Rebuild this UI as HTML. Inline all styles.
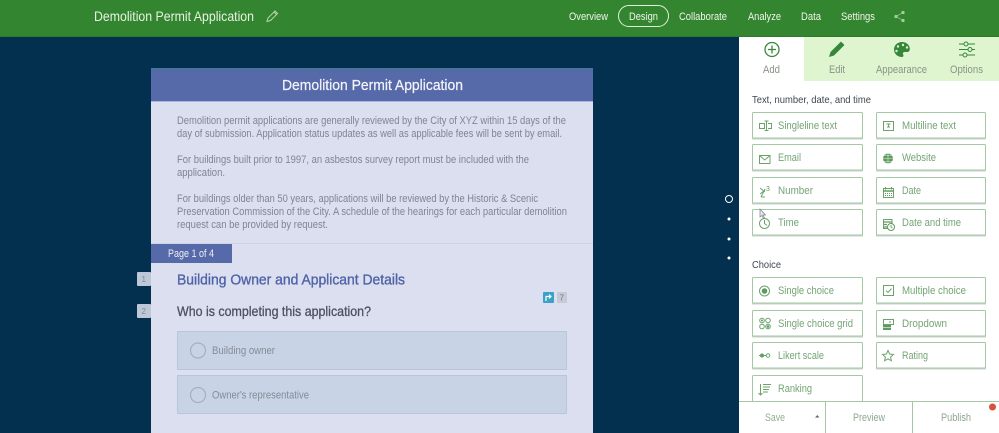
<!DOCTYPE html>
<html><head><meta charset="utf-8"><style>
html,body{margin:0;padding:0;background:#03304f;width:999px;height:433px;overflow:hidden}
svg{display:block;filter:blur(.35px)}
text{font-family:"Liberation Sans",sans-serif}
.b{fill:#fff;stroke:#a3c8a3;stroke-width:1}
.s{fill:#c9d3cc}
.l{fill:#74a474;font-size:11px}
.i{fill:none;stroke:#6ba46b;stroke-width:1}
.f{fill:#5d9c5d}
.p{fill:#7f8493;font-size:11px}
.n{fill:#f1f5ec;font-size:11px}
.t{fill:#869486;font-size:11px}
</style></head><body>
<svg width="999" height="433" viewBox="0 0 999 433" xmlns="http://www.w3.org/2000/svg">
<rect width="999" height="433" fill="#03304f"/>
<rect width="999" height="36" fill="#33862f"/>
<rect y="36" width="999" height="1" fill="#2c7a2e"/>
<text x="94" y="21" font-size="14" fill="#e8f2e4" textLength="160" lengthAdjust="spacingAndGlyphs">Demolition Permit Application</text>
<path d="M267 21.500l1-3.500 7-7 2.500 2.500-7 7z M274 12l2.500 2.500" fill="none" stroke="#b9d4b3" stroke-width="1"/>
<text class="n" x="569" y="20" textLength="39" lengthAdjust="spacingAndGlyphs">Overview</text>
<rect x="618.500" y="5.500" width="50" height="21" rx="10.500" fill="none" stroke="#e3efdd" stroke-width="1"/>
<text class="n" x="629" y="20" textLength="29" lengthAdjust="spacingAndGlyphs">Design</text>
<text class="n" x="679" y="20" textLength="48" lengthAdjust="spacingAndGlyphs">Collaborate</text>
<text class="n" x="748" y="20" textLength="33" lengthAdjust="spacingAndGlyphs">Analyze</text>
<text class="n" x="801" y="20" textLength="20" lengthAdjust="spacingAndGlyphs">Data</text>
<text class="n" x="841" y="20" textLength="34" lengthAdjust="spacingAndGlyphs">Settings</text>
<g fill="#a9c9a3" stroke="#a9c9a3" stroke-width=".7"><circle cx="896" cy="16.500" r="1.300"/><circle cx="903" cy="12.500" r="1.300"/><circle cx="903" cy="20.500" r="1.300"/><path d="M903 12.500l-7 4 7 4" fill="none"/></g>

<rect x="151" y="68" width="442" height="365" fill="#dcdff0"/>
<rect x="151" y="68" width="442" height="33" fill="#5669a8"/>
<rect x="151" y="68" width="442" height="1" fill="#3f7f93"/>
<rect x="151" y="101" width="442" height="1" fill="#aab5dc"/>
<text x="282" y="90" font-size="14.500" fill="#f2f3fa" stroke="#f2f3fa" stroke-width=".25" textLength="181" lengthAdjust="spacingAndGlyphs">Demolition Permit Application</text>
<text class="p" x="177" y="124" textLength="389" lengthAdjust="spacingAndGlyphs">Demolition permit applications are generally reviewed by the City of XYZ within 15 days of the</text>
<text class="p" x="177" y="137" textLength="385" lengthAdjust="spacingAndGlyphs">day of submission. Application status updates as well as applicable fees will be sent by email.</text>
<text class="p" x="177" y="163" textLength="352" lengthAdjust="spacingAndGlyphs">For buildings built prior to 1997, an asbestos survey report must be included with the</text>
<text class="p" x="177" y="176" textLength="48" lengthAdjust="spacingAndGlyphs">application.</text>
<text class="p" x="177" y="202" textLength="361" lengthAdjust="spacingAndGlyphs">For buildings older than 50 years, applications will be reviewed by the Historic &amp; Scenic</text>
<text class="p" x="177" y="215" textLength="390" lengthAdjust="spacingAndGlyphs">Preservation Commission of the City. A schedule of the hearings for each particular demolition</text>
<text class="p" x="177" y="228" textLength="151" lengthAdjust="spacingAndGlyphs">request can be provided by request.</text>
<rect x="151" y="243" width="442" height="1" fill="#cdd4e6"/>
<rect x="151" y="244" width="81" height="19" fill="#5669a8"/>
<text x="168" y="257" font-size="11" fill="#eef0f8" textLength="46" lengthAdjust="spacingAndGlyphs">Page 1 of 4</text>
<rect x="137" y="272" width="14" height="14" rx="1" fill="#bfc8d6"/>
<text x="141.500" y="282" font-size="8" fill="#7f8a98">1</text>
<rect x="137" y="304" width="14" height="14" rx="1" fill="#bfc8d6"/>
<text x="141.500" y="314" font-size="8" fill="#7f8a98">2</text>
<text x="177" y="284.500" font-size="14.500" fill="#4f64a8" stroke="#4f64a8" stroke-width=".35" textLength="228" lengthAdjust="spacingAndGlyphs">Building Owner and Applicant Details</text>
<text x="177" y="316" font-size="14" fill="#4b5160" stroke="#4b5160" stroke-width=".3" textLength="194" lengthAdjust="spacingAndGlyphs">Who is completing this application?</text>
<rect x="543" y="292" width="11" height="11" rx="1" fill="#3aa2c6"/>
<path d="M546 301v-4.500h4.500M549 294.500l2 2-2 2" fill="none" stroke="#fff" stroke-width="1.200"/>
<rect x="557" y="292" width="10" height="11" fill="#c6cbd5"/>
<text x="559.500" y="300.500" font-size="8" fill="#6f7785">7</text>
<rect x="177.500" y="331.500" width="389" height="38" fill="#c8d4e6" stroke="#b9c5d8"/>
<rect x="177.500" y="375.500" width="389" height="38" fill="#c8d4e6" stroke="#b9c5d8"/>
<circle cx="198" cy="350.500" r="7.500" fill="none" stroke="#a8afbc" stroke-width="1.200"/>
<circle cx="198" cy="395" r="7.500" fill="none" stroke="#a8afbc" stroke-width="1.200"/>
<text x="212" y="354" font-size="11" fill="#858a97" textLength="63" lengthAdjust="spacingAndGlyphs">Building owner</text>
<text x="212" y="398.500" font-size="11" fill="#858a97" textLength="97" lengthAdjust="spacingAndGlyphs">Owner's representative</text>

<circle cx="729" cy="199" r="3.500" fill="none" stroke="#fff" stroke-width="1"/>
<circle cx="729" cy="219" r="1.500" fill="#fff"/><circle cx="729" cy="239" r="1.500" fill="#fff"/><circle cx="729" cy="258" r="1.500" fill="#fff"/>

<rect x="739" y="37" width="260" height="396" fill="#fff"/>
<rect x="804" y="37" width="195" height="44" fill="#dff5d0"/>
<circle cx="772" cy="49.500" r="7" fill="none" stroke="#37873a" stroke-width="1.300"/>
<path d="M772 45.500v8M768 49.500h8" stroke="#37873a" stroke-width="1.300"/>
<path d="M829 57l1.500-5 9-9 3.500 3.500-9 9z M841 41.500l3.500 3.500-1.500 1.500-3.500-3.500z" fill="#37873a"/>
<path d="M902 42c-4.500 0-8 3.300-8 7.500s3.500 7.500 8 7.500c2 0 1.500-2 1-3s.5-2 2-2h2c1.500 0 2.800-1 2.800-3 0-4-3.500-7-7.800-7z" fill="#37873a"/>
<g fill="#dff5d0"><circle cx="898" cy="46.500" r="1.200"/><circle cx="903" cy="45" r="1.200"/><circle cx="907" cy="47.500" r="1.200"/><circle cx="896.500" cy="51" r="1.200"/></g>
<g fill="none" stroke="#37873a" stroke-width="1"><path d="M959 44h16M959 49.500h16M959 55h16"/><circle cx="966" cy="44" r="2" fill="#dff5d0"/><circle cx="970" cy="49.500" r="2" fill="#dff5d0"/><circle cx="965" cy="55" r="2" fill="#dff5d0"/></g>
<text class="t" x="763" y="73" textLength="17" lengthAdjust="spacingAndGlyphs">Add</text>
<text class="t" x="829" y="73" textLength="16" lengthAdjust="spacingAndGlyphs">Edit</text>
<text class="t" x="876" y="73" textLength="51" lengthAdjust="spacingAndGlyphs">Appearance</text>
<text class="t" x="950" y="73" textLength="33" lengthAdjust="spacingAndGlyphs">Options</text>

<text x="752" y="103" font-size="10.500" fill="#3f4650" textLength="119" lengthAdjust="spacingAndGlyphs">Text, number, date, and time</text>
<text x="752" y="268" font-size="10.500" fill="#3f4650" textLength="29" lengthAdjust="spacingAndGlyphs">Choice</text>

<g>
<rect class="s" x="752" y="137" width="111" height="2.500"/><rect class="s" x="876" y="137" width="110" height="2.500"/>
<rect class="s" x="752" y="169" width="111" height="2.500"/><rect class="s" x="876" y="169" width="110" height="2.500"/>
<rect class="s" x="752" y="202" width="111" height="2.500"/><rect class="s" x="876" y="202" width="110" height="2.500"/>
<rect class="s" x="752" y="234" width="111" height="2.500"/><rect class="s" x="876" y="234" width="110" height="2.500"/>
<rect class="s" x="752" y="302" width="111" height="2.500"/><rect class="s" x="876" y="302" width="110" height="2.500"/>
<rect class="s" x="752" y="335" width="111" height="2.500"/><rect class="s" x="876" y="335" width="110" height="2.500"/>
<rect class="s" x="752" y="367" width="111" height="2.500"/><rect class="s" x="876" y="367" width="110" height="2.500"/>
<rect class="b" x="752.500" y="112.500" width="110" height="25.500" rx="1"/><rect class="b" x="876.500" y="112.500" width="109" height="25.500" rx="1"/>
<rect class="b" x="752.500" y="144.500" width="110" height="25.500" rx="1"/><rect class="b" x="876.500" y="144.500" width="109" height="25.500" rx="1"/>
<rect class="b" x="752.500" y="177.500" width="110" height="25.500" rx="1"/><rect class="b" x="876.500" y="177.500" width="109" height="25.500" rx="1"/>
<rect class="b" x="752.500" y="209.500" width="110" height="25.500" rx="1"/><rect class="b" x="876.500" y="209.500" width="109" height="25.500" rx="1"/>
<rect class="b" x="752.500" y="277.500" width="110" height="25.500" rx="1"/><rect class="b" x="876.500" y="277.500" width="109" height="25.500" rx="1"/>
<rect class="b" x="752.500" y="310.500" width="110" height="25.500" rx="1"/><rect class="b" x="876.500" y="310.500" width="109" height="25.500" rx="1"/>
<rect class="b" x="752.500" y="342.500" width="110" height="25.500" rx="1"/><rect class="b" x="876.500" y="342.500" width="109" height="25.500" rx="1"/>
<rect class="b" x="752.500" y="375.500" width="110" height="26" rx="1"/>
</g>
<text class="l" x="778" y="129" textLength="59" lengthAdjust="spacingAndGlyphs">Singleline text</text>
<text class="l" x="902" y="129" textLength="54" lengthAdjust="spacingAndGlyphs">Multiline text</text>
<text class="l" x="778" y="161" textLength="23" lengthAdjust="spacingAndGlyphs">Email</text>
<text class="l" x="902" y="161" textLength="34" lengthAdjust="spacingAndGlyphs">Website</text>
<text class="l" x="778" y="194" textLength="35" lengthAdjust="spacingAndGlyphs">Number</text>
<text class="l" x="902" y="194" textLength="19" lengthAdjust="spacingAndGlyphs">Date</text>
<text class="l" x="778" y="226" textLength="21" lengthAdjust="spacingAndGlyphs">Time</text>
<text class="l" x="902" y="226" textLength="59" lengthAdjust="spacingAndGlyphs">Date and time</text>
<text class="l" x="778" y="294" textLength="56" lengthAdjust="spacingAndGlyphs">Single choice</text>
<text class="l" x="902" y="294" textLength="64" lengthAdjust="spacingAndGlyphs">Multiple choice</text>
<text class="l" x="778" y="327" textLength="75" lengthAdjust="spacingAndGlyphs">Single choice grid</text>
<text class="l" x="902" y="327" textLength="45" lengthAdjust="spacingAndGlyphs">Dropdown</text>
<text class="l" x="778" y="359" textLength="46" lengthAdjust="spacingAndGlyphs">Likert scale</text>
<text class="l" x="902" y="359" textLength="26" lengthAdjust="spacingAndGlyphs">Rating</text>
<text class="l" x="778" y="392" textLength="34" lengthAdjust="spacingAndGlyphs">Ranking</text>

<path class="i" d="M759.500 123.500h5v5h-5zM768 123.500h3.500v5H768M764.500 121h4M764.500 130.500h4M766.500 121v9.500"/>
<rect class="i" x="883.500" y="121.500" width="10" height="9"/>
<path class="i" d="M886.500 124h4M888.500 124v3M887 127h3"/>
<rect class="i" x="759.500" y="155.500" width="10.500" height="8"/>
<path class="i" d="M759.500 155.500l5.200 4.500 5.300-4.500"/>
<circle cx="888" cy="158.500" r="5" fill="#5d9c5d"/>
<path d="M883 158.500h10M888 153.500v10M884 155.500h8M884 161.500h8" stroke="#dbead9" stroke-width=".6" fill="none"/>
<path class="i" d="M760 188l5 4M760 194l5-4M761 197h4M765 189l-4 8"/>
<text x="766" y="191" font-size="7" fill="#5d9c5d">3</text>
<rect class="i" x="883.500" y="188.500" width="10" height="9"/>
<path d="M883 191h11" stroke="#5d9c5d" stroke-width="1.500"/>
<path d="M885.500 187v2.500M891.500 187v2.500" stroke="#5d9c5d"/>
<path d="M885 193.500h7M885 195.500h7" stroke="#5d9c5d" stroke-dasharray="1 1"/>
<circle class="i" cx="764.500" cy="223.500" r="5"/>
<path class="i" d="M764.500 220v3.500l2.500 2"/>
<path d="M760 209v8l2-1.500 1.500 3 1-.5-1.500-3h2.500z" fill="#e6e9ec" stroke="#7b8490" stroke-width=".7"/>
<rect class="i" x="883.500" y="219.500" width="8.500" height="9"/>
<path d="M883 222h9M884 224.500h3M884 227h3" stroke="#5d9c5d" stroke-width="1.200"/>
<circle cx="891" cy="227" r="3.500" fill="#fff" stroke="#5d9c5d"/>
<path class="i" d="M891 225v2l1.500 1"/>
<circle class="i" cx="764.500" cy="291" r="5"/><circle class="f" cx="764.500" cy="291" r="2.800"/>
<rect class="i" x="883.500" y="285.500" width="10" height="10"/>
<path class="i" d="M886 290.500l2 2 3.500-4"/>
<g class="i"><circle cx="762" cy="320.500" r="2.300"/><circle cx="768" cy="320.500" r="2.300"/><circle cx="762" cy="326.500" r="2.300"/><circle cx="768" cy="326.500" r="2.300"/></g>
<circle class="f" cx="762" cy="320.500" r="1"/><circle class="f" cx="768" cy="326.500" r="1.300"/>
<rect class="i" x="883.500" y="319.500" width="10" height="5"/>
<path d="M889 322h2" stroke="#5d9c5d"/>
<rect x="883" y="325" width="8" height="5" fill="#5d9c5d"/>
<path d="M883 327.500h8" stroke="#fff" stroke-width=".6"/>
<circle class="f" cx="762" cy="355.500" r="2"/><circle class="i" cx="768" cy="355.500" r="1.800"/>
<path class="i" d="M759 355.500h7"/>
<path class="i" d="M888 350.500l1.600 3.500 3.900.4-2.900 2.600.8 3.800-3.400-2-3.400 2 .8-3.800-2.900-2.600 3.900-.4z"/>
<path class="i" d="M760.500 384v11M758.500 393l2 2 2-2M763 384.500h8M763 387h7M763 389.500h6M763 392h5"/>

<rect x="739" y="402" width="260" height="31" fill="#fff"/>
<rect x="739" y="401" width="260" height="1" fill="#a3c8a3"/>
<rect x="825" y="402" width="1" height="31" fill="#a3c8a3"/>
<rect x="912" y="402" width="1" height="31" fill="#a3c8a3"/>
<text x="765" y="421" font-size="11" fill="#8fb08f" textLength="20" lengthAdjust="spacingAndGlyphs">Save</text>
<path d="M815 417.500h4.500l-2.250-2.500z" fill="#5f6f5f"/>
<text x="853" y="421" font-size="11" fill="#8fa58f" textLength="32" lengthAdjust="spacingAndGlyphs">Preview</text>
<text x="941" y="421" font-size="11" fill="#8fa58f" textLength="30" lengthAdjust="spacingAndGlyphs">Publish</text>
<circle cx="992.500" cy="407" r="3.500" fill="#d9513c"/>
</svg>
</body></html>
